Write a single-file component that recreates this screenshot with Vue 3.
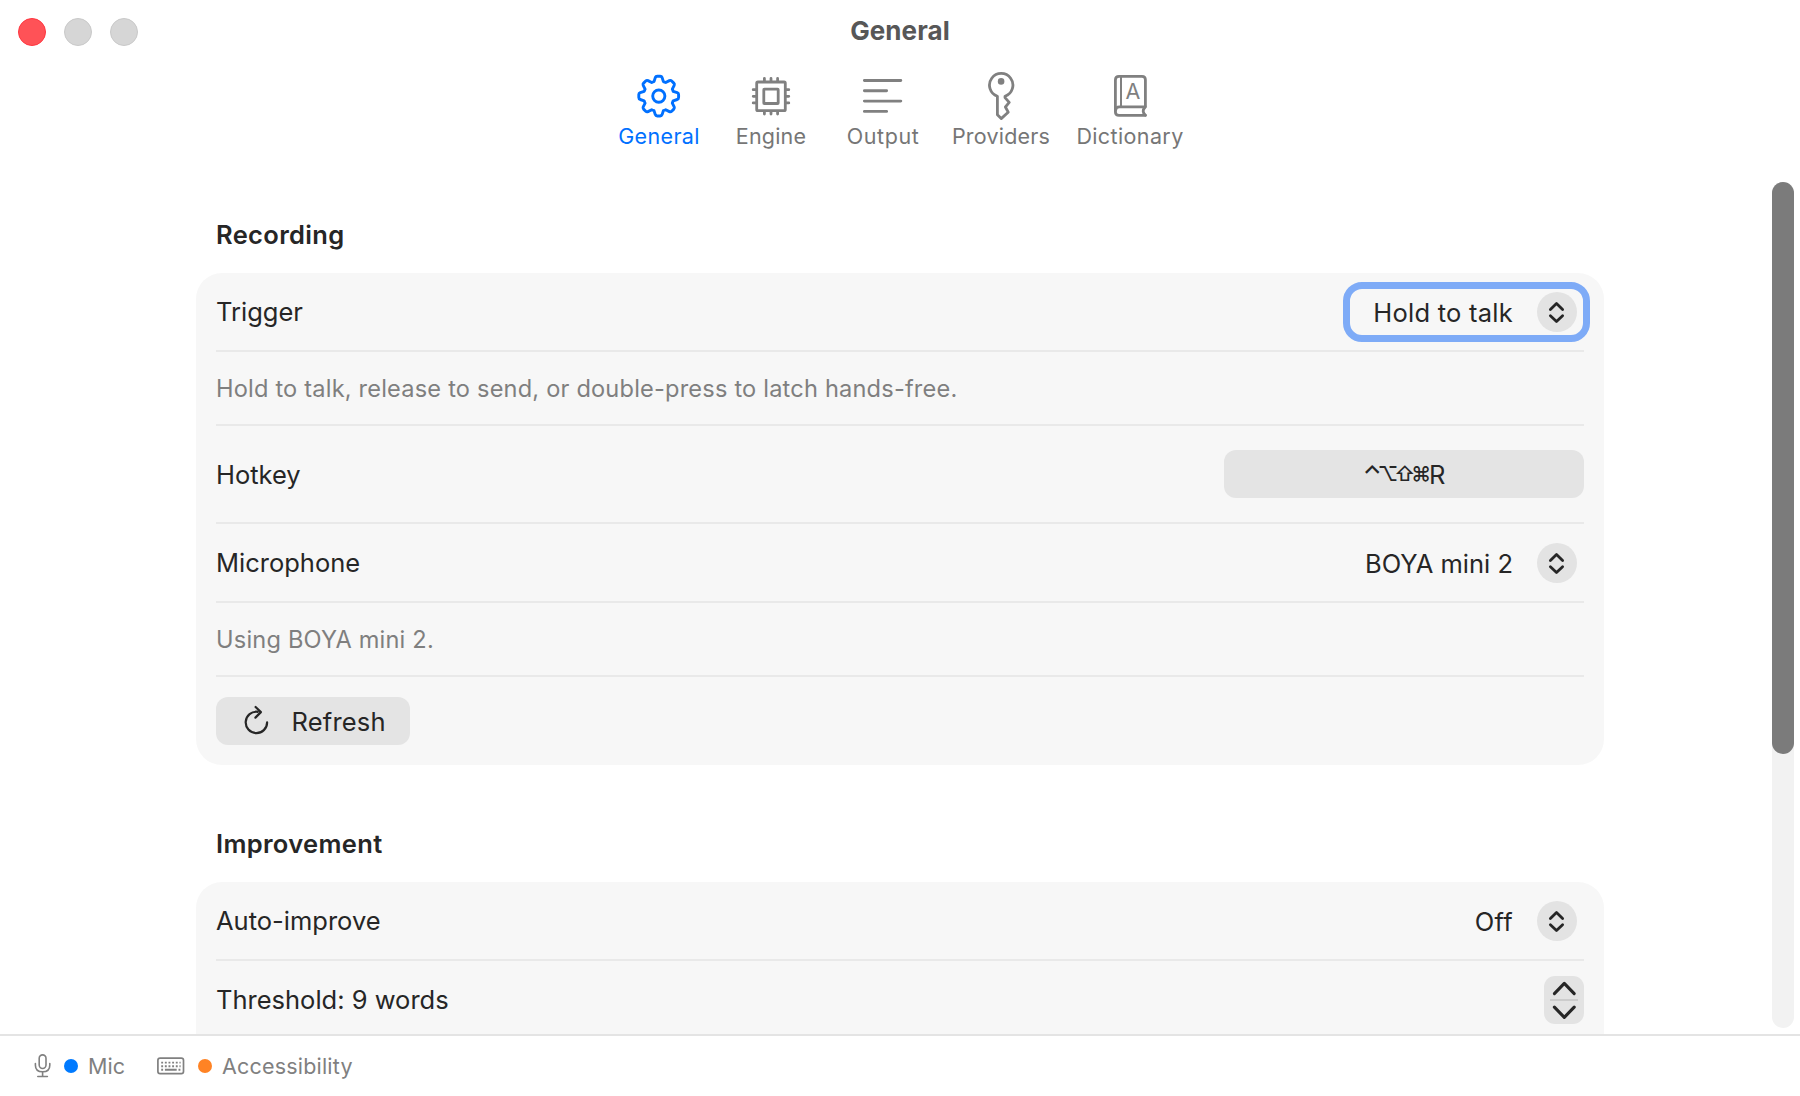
<script setup>
import { ref } from 'vue'

const activeTab = ref('general')
const tabs = [
  { id: 'general', label: 'General', spacing: 0.33 },
  { id: 'engine', label: 'Engine', spacing: 0.2 },
  { id: 'output', label: 'Output', spacing: 0.6 },
  { id: 'providers', label: 'Providers', spacing: 0.2 },
  { id: 'dictionary', label: 'Dictionary', spacing: 0.38 },
]

const title = ref('General')
const trigger = ref('Hold to talk')
const microphone = ref('BOYA mini 2')
const autoImprove = ref('Off')
const threshold = ref(9)
</script>

<template>
  <div class="window">
    <header class="title-bar">
      <div class="lights">
        <span class="light close"></span>
        <span class="light"></span>
        <span class="light"></span>
      </div>
      <h1>{{ title }}</h1>
    </header>

    <nav class="tabs">
      <button
        v-for="tab in tabs"
        :key="tab.id"
        class="tab"
        :class="[tab.id, { active: tab.id === activeTab }]"
        @click="activeTab = tab.id"
      >
        <svg v-if="tab.id === 'general'" viewBox="0 0 48 48" stroke-width="2.9">
          <path d="M19 9.6 L20.3 5.6 Q20.8 4.2 22.2 4.2 H25.2 Q26.6 4.2 27.1 5.6 L28.4 9.6 Q29.6 10 30.7 10.5 L34.4 8.6 Q35.7 8 36.7 9 L38.8 11.1 Q39.8 12.1 39.2 13.4 L37.3 17.1 Q37.9 18.2 38.2 19.4 L42.2 20.7 Q43.6 21.2 43.6 22.6 V25.6 Q43.6 27 42.2 27.5 L38.2 28.8 Q37.8 30 37.3 31.1 L39.2 34.8 Q39.8 36.1 38.8 37.1 L36.7 39.2 Q35.7 40.2 34.4 39.6 L30.7 37.7 Q29.6 38.3 28.4 38.6 L27.1 42.6 Q26.6 44 25.2 44 H22.2 Q20.8 44 20.3 42.6 L19 38.6 Q17.8 38.2 16.7 37.7 L13 39.6 Q11.7 40.2 10.7 39.2 L8.6 37.1 Q7.6 36.1 8.2 34.8 L10.1 31.1 Q9.5 30 9.2 28.8 L5.2 27.5 Q3.8 27 3.8 25.6 V22.6 Q3.8 21.2 5.2 20.7 L9.2 19.4 Q9.6 18.2 10.1 17.1 L8.2 13.4 Q7.6 12.1 8.6 11.1 L10.7 9 Q11.7 8 13 8.6 L16.7 10.5 Q17.8 9.9 19 9.6 Z" />
          <circle cx="23.8" cy="24.1" r="6.1" />
        </svg>
        <svg v-else-if="tab.id === 'engine'" viewBox="0 0 48 48" stroke-width="2.8">
          <rect x="9.7" y="10" width="28.6" height="28.6" rx="1.2" />
          <rect x="16.8" y="17.1" width="14.4" height="14.4" rx="0.6" />
          <path d="M17.4 9V6.4M24 9V6.4M30.6 9V6.4M17.4 39.6v2.4M24 39.6v2.4M30.6 39.6v2.4M8.8 17.7H6.2M8.8 24.3H6.2M8.8 30.9H6.2M39.2 17.7H41.8M39.2 24.3H41.8M39.2 30.9H41.8" />
        </svg>
        <svg v-else-if="tab.id === 'output'" viewBox="0 0 48 48" stroke-width="2.9">
          <path d="M5.4 8.5H41.8M5.4 18.8H27.6M5.4 29.1H41.8M5.4 39.4H27.6" />
        </svg>
        <svg v-else-if="tab.id === 'providers'" viewBox="0 0 48 48" stroke-width="2.8">
          <path d="M20.4 24.2A11.7 11.7 0 1 1 28 24.2V25.6L32.2 30.4L28.4 35L31.2 40.2L24.2 46.6L20.4 42.8Z" />
          <circle class="solid" cx="24.1" cy="9.4" r="3.3" />
        </svg>
        <svg v-else viewBox="0 0 48 48" stroke-width="2.8">
          <path d="M39.4 34.6V7.8Q39.4 4.4 36 4.4H13Q9.4 4.4 9.4 8V40Q9.4 43.3 13 43.3H39.4" />
          <path d="M9.5 38.6Q9.8 34.9 13.4 34.9H39.3Q35 39.2 39.4 43.2" />
          <path stroke-width="2" d="M15 4.8V34.4" />
          <text x="26.8" y="27.3">A</text>
        </svg>
        <span class="tab-label" :style="{ letterSpacing: tab.spacing + 'px' }">{{ tab.label }}</span>
      </button>
    </nav>

    <main class="content">
      <div class="form">
        <h2>Recording</h2>
        <section class="card">
          <div class="row">
            <label>Trigger</label>
            <button class="picker focused">
              <span class="value wide">{{ trigger }}</span>
              <span class="knob">
                <svg viewBox="0 0 40 40"><path d="M13.4 17.4L19.5 11.4L25.6 17.4M13.4 23.8L19.5 29.6L25.6 23.8" /></svg>
              </span>
            </button>
          </div>
          <div class="row hint">Hold to talk, release to send, or double-press to latch hands-free.</div>
          <div class="row hotkey-row">
            <label>Hotkey</label>
            <button class="hotkey"><span class="ctrl">⌃</span><span class="mods">⌥⇧⌘</span><span>R</span></button>
          </div>
          <div class="row">
            <label>Microphone</label>
            <button class="picker">
              <span class="value">{{ microphone }}</span>
              <span class="knob">
                <svg viewBox="0 0 40 40"><path d="M13.4 17.4L19.5 11.4L25.6 17.4M13.4 23.8L19.5 29.6L25.6 23.8" /></svg>
              </span>
            </button>
          </div>
          <div class="row hint">Using {{ microphone }}.</div>
          <div class="row refresh-row">
            <button class="refresh">
              <svg viewBox="0 0 28 32">
                <path d="M14.6 6.8A10.7 10.7 0 1 0 24.1 17.4M12.6 2L17.9 7.1L12.4 12.6" />
              </svg>
              <span>Refresh</span>
            </button>
          </div>
        </section>

        <h2>Improvement</h2>
        <section class="card overflowing">
          <div class="row">
            <label>Auto-improve</label>
            <button class="picker">
              <span class="value wide">{{ autoImprove }}</span>
              <span class="knob">
                <svg viewBox="0 0 40 40"><path d="M13.4 17.4L19.5 11.4L25.6 17.4M13.4 23.8L19.5 29.6L25.6 23.8" /></svg>
              </span>
            </button>
          </div>
          <div class="row">
            <label>Threshold: {{ threshold }} words</label>
            <div class="stepper">
              <button aria-label="Increase" @click="threshold++">
                <svg viewBox="0 0 40 23"><path d="M10.4 17.6L20.3 7.4L30.2 17.6" /></svg>
              </button>
              <i></i>
              <button aria-label="Decrease" @click="threshold--">
                <svg viewBox="0 0 40 23"><path d="M10.4 6.2L20.3 16.4L30.2 6.2" /></svg>
              </button>
            </div>
          </div>
        </section>
      </div>
      <div class="scrollbar"><div class="thumb"></div></div>
    </main>

    <footer class="status-bar">
      <div class="status">
        <svg class="mic" viewBox="0 0 18 26">
          <rect x="5.2" y="1.9" width="6.8" height="13.6" rx="3.4" />
          <path d="M1.4 10.6V12.2Q1.4 18.8 8.6 18.8Q15.8 18.8 15.8 12.2V10.6M8.6 18.8V23.5M3.8 23.5H13.4" />
        </svg>
        <span class="dot blue"></span>
        <span>Mic</span>
      </div>
      <div class="status">
        <svg class="keyboard" viewBox="0 0 28 18">
          <rect x="0.9" y="1.1" width="25.6" height="15.6" rx="2.2" />
          <path stroke-dasharray="1.9 1.75" stroke-width="1.9" d="M4.2 5.6H23.6M4.2 9.2H23.6" />
          <path stroke-width="1.9" d="M4.2 12.8H6.1M7.9 12.8H19.7M21.5 12.8H23.4" />
        </svg>
        <span class="dot orange"></span>
        <span>Accessibility</span>
      </div>
    </footer>
  </div>
</template>

<style>
body {
  margin: 0;
  background: #fff;
}
</style>

<style scoped>
.window {
  display: flex;
  flex-direction: column;
  width: 1800px;
  height: 1096px;
  overflow: hidden;
  background: #fff;
  color: #262626;
  font-family: Inter, "Liberation Sans", sans-serif;
  font-size: 25.5px;
}

button {
  border: none;
  padding: 0;
  background: none;
  color: inherit;
  font: inherit;
}

svg {
  display: block;
  fill: none;
  stroke: currentColor;
  stroke-linecap: round;
  stroke-linejoin: round;
}

/* title bar */
.title-bar {
  display: grid;
  grid-template-columns: 1fr auto 1fr;
  align-items: center;
  height: 62px;
  flex: none;
}

.lights {
  display: flex;
  gap: 18px;
  padding: 2px 0 0 18px;
}

.light {
  box-sizing: border-box;
  width: 28px;
  height: 28px;
  border: 1px solid #c9c9c9;
  border-radius: 50%;
  background: #d6d6d6;
}

.light.close {
  border-color: #ff3640;
  background: #ff5257;
}

h1 {
  margin: 0;
  padding-bottom: 2px;
  color: #575757;
  font-size: 26px;
  font-weight: 700;
  letter-spacing: 0.1px;
}

/* toolbar */
.tabs {
  display: flex;
  justify-content: center;
  gap: 12px;
  height: 120px;
  flex: none;
  box-sizing: border-box;
  padding-top: 10px;
}

.tab {
  display: flex;
  flex-direction: column;
  align-items: center;
  width: 100px;
  height: 90px;
  color: #808080;
  font-size: 21.5px;
}

.tab.providers {
  width: 112px;
}

.tab.dictionary {
  width: 122px;
}

.tab.active {
  color: #0070ff;
}

.tab svg {
  width: 48px;
  height: 48px;
}

.tab svg text {
  fill: currentColor;
  stroke: none;
  font-size: 21.5px;
  text-anchor: middle;
}

.tab .solid {
  fill: currentColor;
  stroke: none;
}

.tab-label {
  line-height: 26px;
  margin-top: 3px;
}

.tab:not(.active) .tab-label {
  color: #767676;
}

/* settings form */
.content {
  display: flex;
  flex: 1;
  min-height: 0;
  overflow: hidden;
}

.form {
  width: 1408px;
  margin-left: 196px;
}

h2 {
  margin: 0 0 0 20px;
  padding: 36px 0 21px;
  font-size: 25.5px;
  font-weight: 600;
  line-height: 34px;
  letter-spacing: 0.34px;
}

.card {
  padding: 0 20px;
  border-radius: 26px;
  background: #f7f7f7;
}

.card + h2 {
  padding-top: 62px;
}

.row {
  box-sizing: border-box;
  display: flex;
  align-items: center;
  justify-content: space-between;
  height: 79px;
  border-bottom: 2px solid #e9e9e9;
}

.row:last-child {
  border-bottom: none;
}

/* the last card scrolls on below the status bar */
.card.overflowing {
  padding-bottom: 60px;
}

.card.overflowing .row:last-child {
  height: 78px;
}

.card.overflowing .row:last-child label {
  padding-bottom: 2px;
}

.row.hint {
  height: 74px;
  color: #7f7f7f;
  font-size: 23.6px;
  letter-spacing: 0.19px;
}

.row.hotkey-row {
  height: 98px;
}

.row.refresh-row {
  height: 88px;
}

.picker {
  display: flex;
  align-items: center;
  gap: 24px;
  margin-right: 7px;
}

.picker .value {
  position: relative;
  top: 1px;
}

.picker .wide {
  letter-spacing: 0.25px;
}

.picker.focused {
  box-sizing: border-box;
  height: 60px;
  padding: 0 6px 0 23px;
  margin-right: -6px;
  border: 7px solid #7eabf7;
  border-radius: 19px;
}

.knob {
  width: 40px;
  height: 40px;
  border-radius: 50%;
  background: #e3e3e3;
}

.knob svg {
  width: 40px;
  height: 40px;
  stroke-width: 2.8;
}

.hotkey {
  display: flex;
  align-items: center;
  justify-content: center;
  width: 360px;
  height: 48px;
  border-radius: 12px;
  background: #e4e4e4;
}

.ctrl {
  font-size: 24px;
  font-weight: 500;
  letter-spacing: -3.8px;
}

.mods {
  margin-right: 2px;
  font-size: 20px;
  font-weight: 500;
  letter-spacing: -4.1px;
}

.refresh {
  display: flex;
  align-items: center;
  width: 194px;
  height: 48px;
  border-radius: 12px;
  background: #e4e4e4;
  letter-spacing: 0.19px;
}

.refresh svg {
  width: 28px;
  height: 32px;
  margin: 0 21px 0 26.5px;
  stroke-width: 2.2;
}

.stepper {
  display: flex;
  flex-direction: column;
  align-items: center;
  width: 40px;
  height: 48px;
  border-radius: 11px;
  background: #e3e3e3;
}

.stepper button {
  height: 23px;
}

.stepper svg {
  width: 40px;
  height: 23px;
  stroke-width: 3.1;
}

.stepper i {
  width: 28px;
  height: 2px;
  background: #cccccc;
}

.scrollbar {
  width: 22px;
  height: 846px;
  margin-left: 168px;
  border-radius: 11px;
  background: #f2f2f2;
}

.thumb {
  height: 572px;
  border-radius: 11px;
  background: #7b7b7b;
}

/* status bar */
.status-bar {
  display: flex;
  flex: none;
  box-sizing: border-box;
  gap: 32px;
  height: 62px;
  padding-left: 34px;
  border-top: 2px solid #e4e4e4;
  background: #fff;
  color: #808080;
  font-size: 21.5px;
}

.status {
  display: flex;
  align-items: center;
  height: 60px;
}

.mic {
  width: 18px;
  height: 26px;
  stroke-width: 1.6;
}

.keyboard {
  width: 28px;
  height: 18px;
  stroke-width: 1.7;
}

.keyboard path {
  stroke-linecap: butt;
}

.dot {
  width: 14px;
  height: 14px;
  margin: 0 10px 0 12px;
  border-radius: 50%;
}

.dot.blue {
  background: #007aff;
}

.dot.orange {
  margin-left: 13px;
  background: #ff8324;
}

.dot.orange + span {
  letter-spacing: 0.2px;
}
</style>
